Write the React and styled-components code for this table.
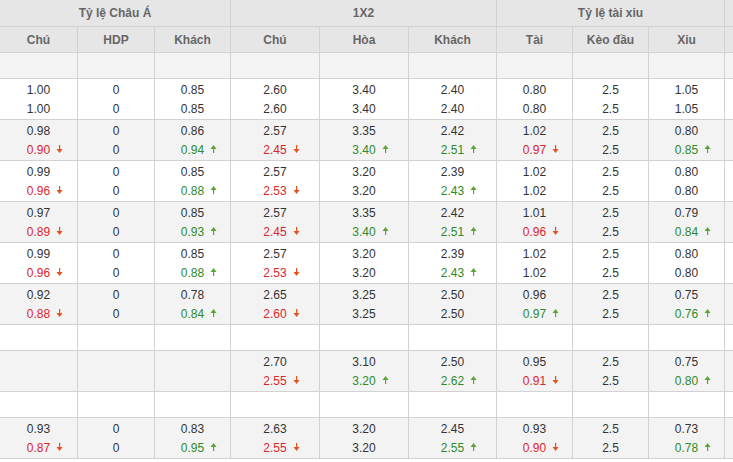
import styled, { createGlobalStyle } from 'styled-components';

const GlobalStyle = createGlobalStyle`
  body {
    margin: 0;
    background: #fff;
    font-family: "Liberation Sans", Arial, sans-serif;
    overflow: hidden;
  }
`;

const Wrap = styled.div`
  width: 733px;
  height: 462px;
  overflow: hidden;
`;

const Table = styled.table`
  border-collapse: collapse;
  table-layout: fixed;
  width: 800px;
  margin: -1px 0 0 -1px;
  font-size: 12px;
  color: #333;
`;

const HeadCell = styled.th`
  height: ${p => (p.$top ? '26px' : '25px')};
  padding: 0;
  background: #e6e6e6;
  border: 1px solid #d2d2d2;
  color: #666;
  font-weight: bold;
  font-size: 12px;
  text-align: center;
  vertical-align: middle;
`;

const Row = styled.tr`
  background: ${p => (p.$shade ? '#f3f3f3' : '#fff')};
`;

const Cell = styled.td`
  height: ${p => (p.$short ? '25px' : '38px')};
  padding: ${p => (p.$short ? '0' : '2px 0 0')};
  border: 1px solid #d2d2d2;
  text-align: center;
  vertical-align: middle;
`;

const Line = styled.div`
  height: 19px;
  line-height: 19px;
`;

const Num = styled.span`
  position: relative;
  color: ${p => (p.$dir === 'down' ? '#d9262c' : p.$dir === 'up' ? '#2f8a2a' : '#333')};
`;

const Arrow = styled.svg`
  position: absolute;
  left: 100%;
  top: 2px;
  margin-left: 6px;
`;

function ArrowIcon({ dir }) {
  const color = dir === 'down' ? '#e4521d' : '#5aa532';
  return (
    <Arrow width="7" height="8" viewBox="0 0 7 8">
      {dir === 'down' ? (
        <>
          <rect x="3" y="0" width="1.2" height="5" fill={color} />
          <path d="M0.5 4 L6.5 4 L3.6 8 Z" fill={color} />
        </>
      ) : (
        <>
          <rect x="3" y="3" width="1.2" height="5" fill={color} />
          <path d="M0.5 4 L6.5 4 L3.6 0 Z" fill={color} />
        </>
      )}
    </Arrow>
  );
}

// value string: "0.90d" = down, "0.94u" = up
function Value({ v }) {
  const last = v.slice(-1);
  const dir = last === 'd' ? 'down' : last === 'u' ? 'up' : null;
  const text = dir ? v.slice(0, -1) : v;
  return (
    <Num $dir={dir}>
      {text}
      {dir && <ArrowIcon dir={dir} />}
    </Num>
  );
}

const rows = [
  { shade: false, cells: [['1.00', '1.00'], ['0', '0'], ['0.85', '0.85'], ['2.60', '2.60'], ['3.40', '3.40'], ['2.40', '2.40'], ['0.80', '0.80'], ['2.5', '2.5'], ['1.05', '1.05']] },
  { shade: true, cells: [['0.98', '0.90d'], ['0', '0'], ['0.86', '0.94u'], ['2.57', '2.45d'], ['3.35', '3.40u'], ['2.42', '2.51u'], ['1.02', '0.97d'], ['2.5', '2.5'], ['0.80', '0.85u']] },
  { shade: false, cells: [['0.99', '0.96d'], ['0', '0'], ['0.85', '0.88u'], ['2.57', '2.53d'], ['3.20', '3.20'], ['2.39', '2.43u'], ['1.02', '1.02'], ['2.5', '2.5'], ['0.80', '0.80']] },
  { shade: true, cells: [['0.97', '0.89d'], ['0', '0'], ['0.85', '0.93u'], ['2.57', '2.45d'], ['3.35', '3.40u'], ['2.42', '2.51u'], ['1.01', '0.96d'], ['2.5', '2.5'], ['0.79', '0.84u']] },
  { shade: false, cells: [['0.99', '0.96d'], ['0', '0'], ['0.85', '0.88u'], ['2.57', '2.53d'], ['3.20', '3.20'], ['2.39', '2.43u'], ['1.02', '1.02'], ['2.5', '2.5'], ['0.80', '0.80']] },
  { shade: true, cells: [['0.92', '0.88d'], ['0', '0'], ['0.78', '0.84u'], ['2.65', '2.60d'], ['3.25', '3.25'], ['2.50', '2.50'], ['0.96', '0.97u'], ['2.5', '2.5'], ['0.75', '0.76u']] },
  { empty: true, shade: false },
  { shade: true, cells: [null, null, null, ['2.70', '2.55d'], ['3.10', '3.20u'], ['2.50', '2.62u'], ['0.95', '0.91d'], ['2.5', '2.5'], ['0.75', '0.80u']] },
  { empty: true, shade: false },
  { shade: true, cells: [['0.93', '0.87d'], ['0', '0'], ['0.83', '0.95u'], ['2.63', '2.55d'], ['3.20', '3.20'], ['2.45', '2.55u'], ['0.93', '0.90d'], ['2.5', '2.5'], ['0.73', '0.78u']] },
];

const widths = [78, 77, 76, 89, 89, 88, 76, 76, 76, 74];
const subHeads = ['Chú', 'HDP', 'Khách', 'Chú', 'Hòa', 'Khách', 'Tài', 'Kèo đầu', 'Xiu'];

export default function App() {
  return (
    <Wrap>
      <GlobalStyle />
      <Table>
        <colgroup>
          {widths.map((w, i) => (
            <col key={i} style={{ width: w }} />
          ))}
        </colgroup>
        <thead>
          <tr>
            <HeadCell $top colSpan={3}>Tỷ lệ Châu Á</HeadCell>
            <HeadCell $top colSpan={3}>1X2</HeadCell>
            <HeadCell $top colSpan={3}>Tỷ lệ tài xiu</HeadCell>
            <HeadCell $top />
          </tr>
          <tr>
            {subHeads.map((h, i) => (
              <HeadCell key={i}>{h}</HeadCell>
            ))}
            <HeadCell />
          </tr>
        </thead>
        <tbody>
          <Row $shade>
            {widths.map((_, i) => (
              <Cell key={i} $short />
            ))}
          </Row>
          {rows.map((r, ri) => (
            <Row key={ri} $shade={r.shade}>
              {r.empty
                ? widths.map((_, i) => <Cell key={i} $short />)
                : [
                    ...r.cells.map((c, ci) => (
                      <Cell key={ci}>
                        {c && (
                          <>
                            <Line><Value v={c[0]} /></Line>
                            <Line><Value v={c[1]} /></Line>
                          </>
                        )}
                      </Cell>
                    )),
                    <Cell key="x" />,
                  ]}
            </Row>
          ))}
        </tbody>
      </Table>
    </Wrap>
  );
}
